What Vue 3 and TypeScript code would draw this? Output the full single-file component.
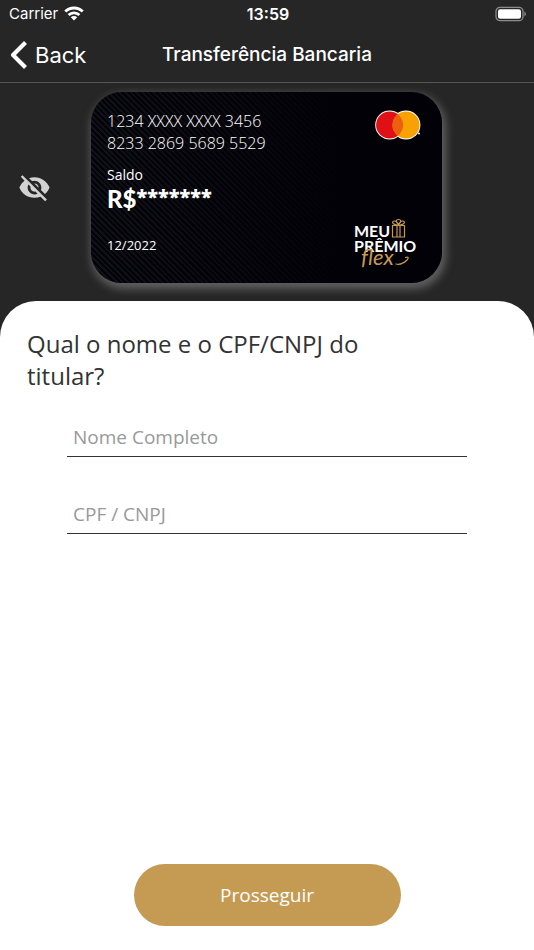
<script setup lang="ts">
import { computed, ref } from 'vue'

const fullName = ref('')
const documentId = ref('')
const balanceVisible = ref(false)
const maskedBalance = computed(() => (balanceVisible.value ? '0,00' : '*******'))
</script>

<template>
  <main class="screen">
    <div class="status">
      <div class="carrier">
        <span>Carrier</span>
        <svg width="20" height="15" viewBox="0 0 20 15" aria-hidden="true">
          <g fill="none" stroke="#fff" stroke-width="2.8">
            <path d="M1.3 5.6a12.3 12.3 0 0 1 17.4 0" />
            <path d="M4.6 9a7.7 7.7 0 0 1 10.8 0" />
          </g>
          <path d="M6.8 11.2a4.6 4.6 0 0 1 6.4 0L10 14.5z" fill="#fff" />
        </svg>
      </div>
      <time class="clock">13:59</time>
      <svg class="battery" width="32" height="16" viewBox="0 0 32 16" aria-hidden="true">
        <rect x="1" y="1.3" width="27" height="13.4" rx="4" fill="none" stroke="#8c8c8c" stroke-width="1.3" />
        <rect x="3" y="3.2" width="23" height="9.6" rx="2.2" fill="#fff" />
        <path d="M29.4 5.6c2 .8 2 4 0 4.8z" fill="#8c8c8c" />
      </svg>
    </div>

    <header class="nav">
      <button class="back" type="button">
        <svg width="18" height="28" viewBox="0 0 18 28" aria-hidden="true">
          <path d="M15.5 1.5 3 14l12.5 12.5" fill="none" stroke="#fff" stroke-width="4.2" stroke-linejoin="round" />
        </svg>
        <span>Back</span>
      </button>
      <h1>Transferência Bancaria</h1>
    </header>

    <section class="account">
      <button class="eye" type="button" aria-label="Saldo" @click="balanceVisible = !balanceVisible">
        <svg width="33" height="33" viewBox="0 0 24 24" aria-hidden="true">
          <path
            fill="#d2d2d2"
            d="M12 7c2.76 0 5 2.24 5 5 0 .65-.13 1.26-.36 1.83l2.92 2.92c1.51-1.26 2.7-2.89 3.43-4.75-1.73-4.39-6-7.5-11-7.5-1.4 0-2.74.25-3.98.7l2.16 2.16C10.74 7.13 11.35 7 12 7zM2 4.27l2.28 2.28.46.46C3.08 8.3 1.78 10.02 1 12c1.73 4.39 6 7.5 11 7.5 1.55 0 3.03-.3 4.38-.84l.42.42L19.73 22 21 20.73 3.27 3 2 4.27zM7.53 9.8l1.55 1.55c-.05.21-.08.43-.08.65 0 1.66 1.34 3 3 3 .22 0 .44-.03.65-.08l1.55 1.55c-.67.33-1.41.53-2.2.53-2.76 0-5-2.24-5-5 0-.79.2-1.53.53-2.2zm4.31-.78l3.15 3.15.02-.16c0-1.66-1.34-3-3-3l-.17.01z"
          />
        </svg>
      </button>

      <article class="card">
        <div class="details">
          <p class="number">1234 XXXX XXXX 3456</p>
          <p class="number">8233 2869 5689 5529</p>
          <p class="label">Saldo</p>
          <p class="balance">R$<span class="mask">{{ maskedBalance }}</span></p>
          <p class="expiry">12/2022</p>
        </div>
        <div class="brands">
          <svg width="46" height="30" viewBox="0 0 46 30" aria-hidden="true">
            <g fill="#fff">
              <circle cx="14.6" cy="15" r="14.4" />
              <circle cx="31" cy="15" r="14.4" />
              <circle cx="44" cy="23.5" r="1" />
            </g>
            <circle cx="14.6" cy="15" r="13.5" fill="#df1016" />
            <circle cx="31" cy="15" r="13.5" fill="#f7a102" />
            <path d="M22.8 4.3a13.5 13.5 0 0 1 0 21.4 13.5 13.5 0 0 1 0-21.4z" fill="#ec5f0c" />
          </svg>
          <svg class="logo" width="64" height="52" viewBox="0 0 64 52" role="img" aria-label="Meu Prêmio flex">
            <text class="logo-word" x="0" y="18">MEU</text>
            <text class="logo-word" x="0" y="33">PRÊMIO</text>
            <g fill="none" stroke="#c79a52" stroke-width="1.2" stroke-linecap="round" stroke-linejoin="round">
              <path d="M38.5 6.5h12V18h-12zM43 6.500V18M46 6.500V18" />
              <path d="M44.5 6C39 6.500 37 2.500 40 2c2-.2 4 2 4.500 4zM44.500 6C50 6.500 52 2.500 49 2c-2-.2-4 2-4.500 4zM44.500 5.500C41 2.500 42 .5 44.500 .5s3.500 2 0 5" />
              <path d="M42 45c4 1 8-1 11-4 2.500-2.500 1-3.500-1.500-2.500" />
            </g>
            <text class="logo-script" x="7" y="46">flex</text>
          </svg>
        </div>
      </article>
    </section>

    <form class="sheet" @submit.prevent>
      <h2>Qual o nome e o CPF/CNPJ do titular?</h2>
      <div class="fields">
        <input v-model="fullName" type="text" placeholder="Nome Completo" aria-label="Nome Completo" />
        <input v-model="documentId" type="text" inputmode="numeric" placeholder="CPF / CNPJ" aria-label="CPF / CNPJ" />
      </div>
      <button class="submit" type="submit">Prosseguir</button>
    </form>
  </main>
</template>

<style>
body {
  margin: 0;
  background: #262626;
}
</style>

<style scoped>
* {
  box-sizing: border-box;
}

.screen {
  display: flex;
  flex-direction: column;
  min-height: 100vh;
  background: #262626;
  color: #fff;
  font-family: 'Open Sans', 'Noto Sans', sans-serif;
}

h1,
h2,
p {
  margin: 0;
  font-weight: 400;
}

button {
  border: 0;
  padding: 0;
  background: none;
  color: inherit;
  font: inherit;
  cursor: pointer;
}

svg {
  display: block;
}

.status,
.nav {
  display: grid;
  grid-template-columns: 1fr auto 1fr;
  align-items: center;
  font-family: Inter, 'Liberation Sans', sans-serif;
}

.status {
  height: 27px;
  padding: 0 7px 0 9px;
  font-size: 15px;
}

.carrier {
  display: flex;
  align-items: center;
  gap: 6px;
}

.clock {
  font-size: 16px;
  font-weight: 600;
}

.battery {
  justify-self: end;
}

.nav {
  height: 56px;
  padding: 0 10px;
  border-bottom: 1px solid #555;
}

.back {
  display: flex;
  align-items: center;
  justify-self: start;
  gap: 7px;
  font-size: 22px;
}

.nav h1 {
  font-size: 19px;
  font-weight: 500;
}

.account {
  display: grid;
  grid-template-columns: 69px minmax(0, 351px) 70px;
  justify-content: center;
  align-items: center;
  column-gap: 22px;
  padding: 9px 0 18px;
}

.eye {
  justify-self: center;
}

.card {
  display: flex;
  justify-content: space-between;
  min-height: 191px;
  padding: 18px 21px 12px 16px;
  border-radius: 31px;
  background:
    linear-gradient(90deg, transparent, #020107 75%),
    repeating-linear-gradient(45deg, #030208 0 2px, #111118 2px 4px);
  box-shadow: 2px 4px 9px 2px #606060;
}

.number {
  font-size: 16px;
  font-weight: 300;
  line-height: 22px;
}

.label {
  margin-top: 11px;
  font-size: 14px;
  line-height: 20px;
}

.balance {
  height: 28px;
  font-family: Lato, 'Open Sans', sans-serif;
  font-size: 24px;
  font-weight: 900;
  line-height: 28px;
}

.mask {
  font-family: 'Open Sans', sans-serif;
  font-size: 20px;
  font-weight: 800;
  line-height: 20px;
  vertical-align: 4px;
}

.expiry {
  margin-top: 22px;
  font-size: 13px;
  line-height: 20px;
}

.brands {
  display: flex;
  flex-direction: column;
  justify-content: space-between;
  align-items: flex-end;
}

.logo {
  overflow: visible;
  margin-right: 3px;
}

.logo-word {
  fill: #fff;
  font: 700 16px Lato, sans-serif;
}

.logo-script {
  fill: #c79a52;
  font: italic 400 22px Lato, sans-serif;
}

.sheet {
  display: flex;
  flex: 1;
  flex-direction: column;
  padding: 27px 27px 24px;
  border-radius: 36px 36px 0 0;
  background: #fff;
  color: #333;
}

.sheet h2 {
  max-width: 360px;
  font-size: 24px;
  line-height: 32px;
}

.fields {
  display: flex;
  flex-direction: column;
  gap: 37px;
  margin: 25px 40px 32px;
}

.fields input {
  width: 100%;
  height: 40px;
  border: 0;
  border-bottom: 1px solid #333;
  border-radius: 0;
  padding: 0 6px;
  background: none;
  color: #333;
  font: inherit;
  font-size: 19px;
  outline: none;
}

.fields input::placeholder {
  color: #999;
  opacity: 1;
}

.submit {
  align-self: center;
  width: 50vw;
  height: 62px;
  margin-top: auto;
  border-radius: 31px;
  background: #c59a52;
  color: #fff;
  font-size: 19px;
}
</style>
